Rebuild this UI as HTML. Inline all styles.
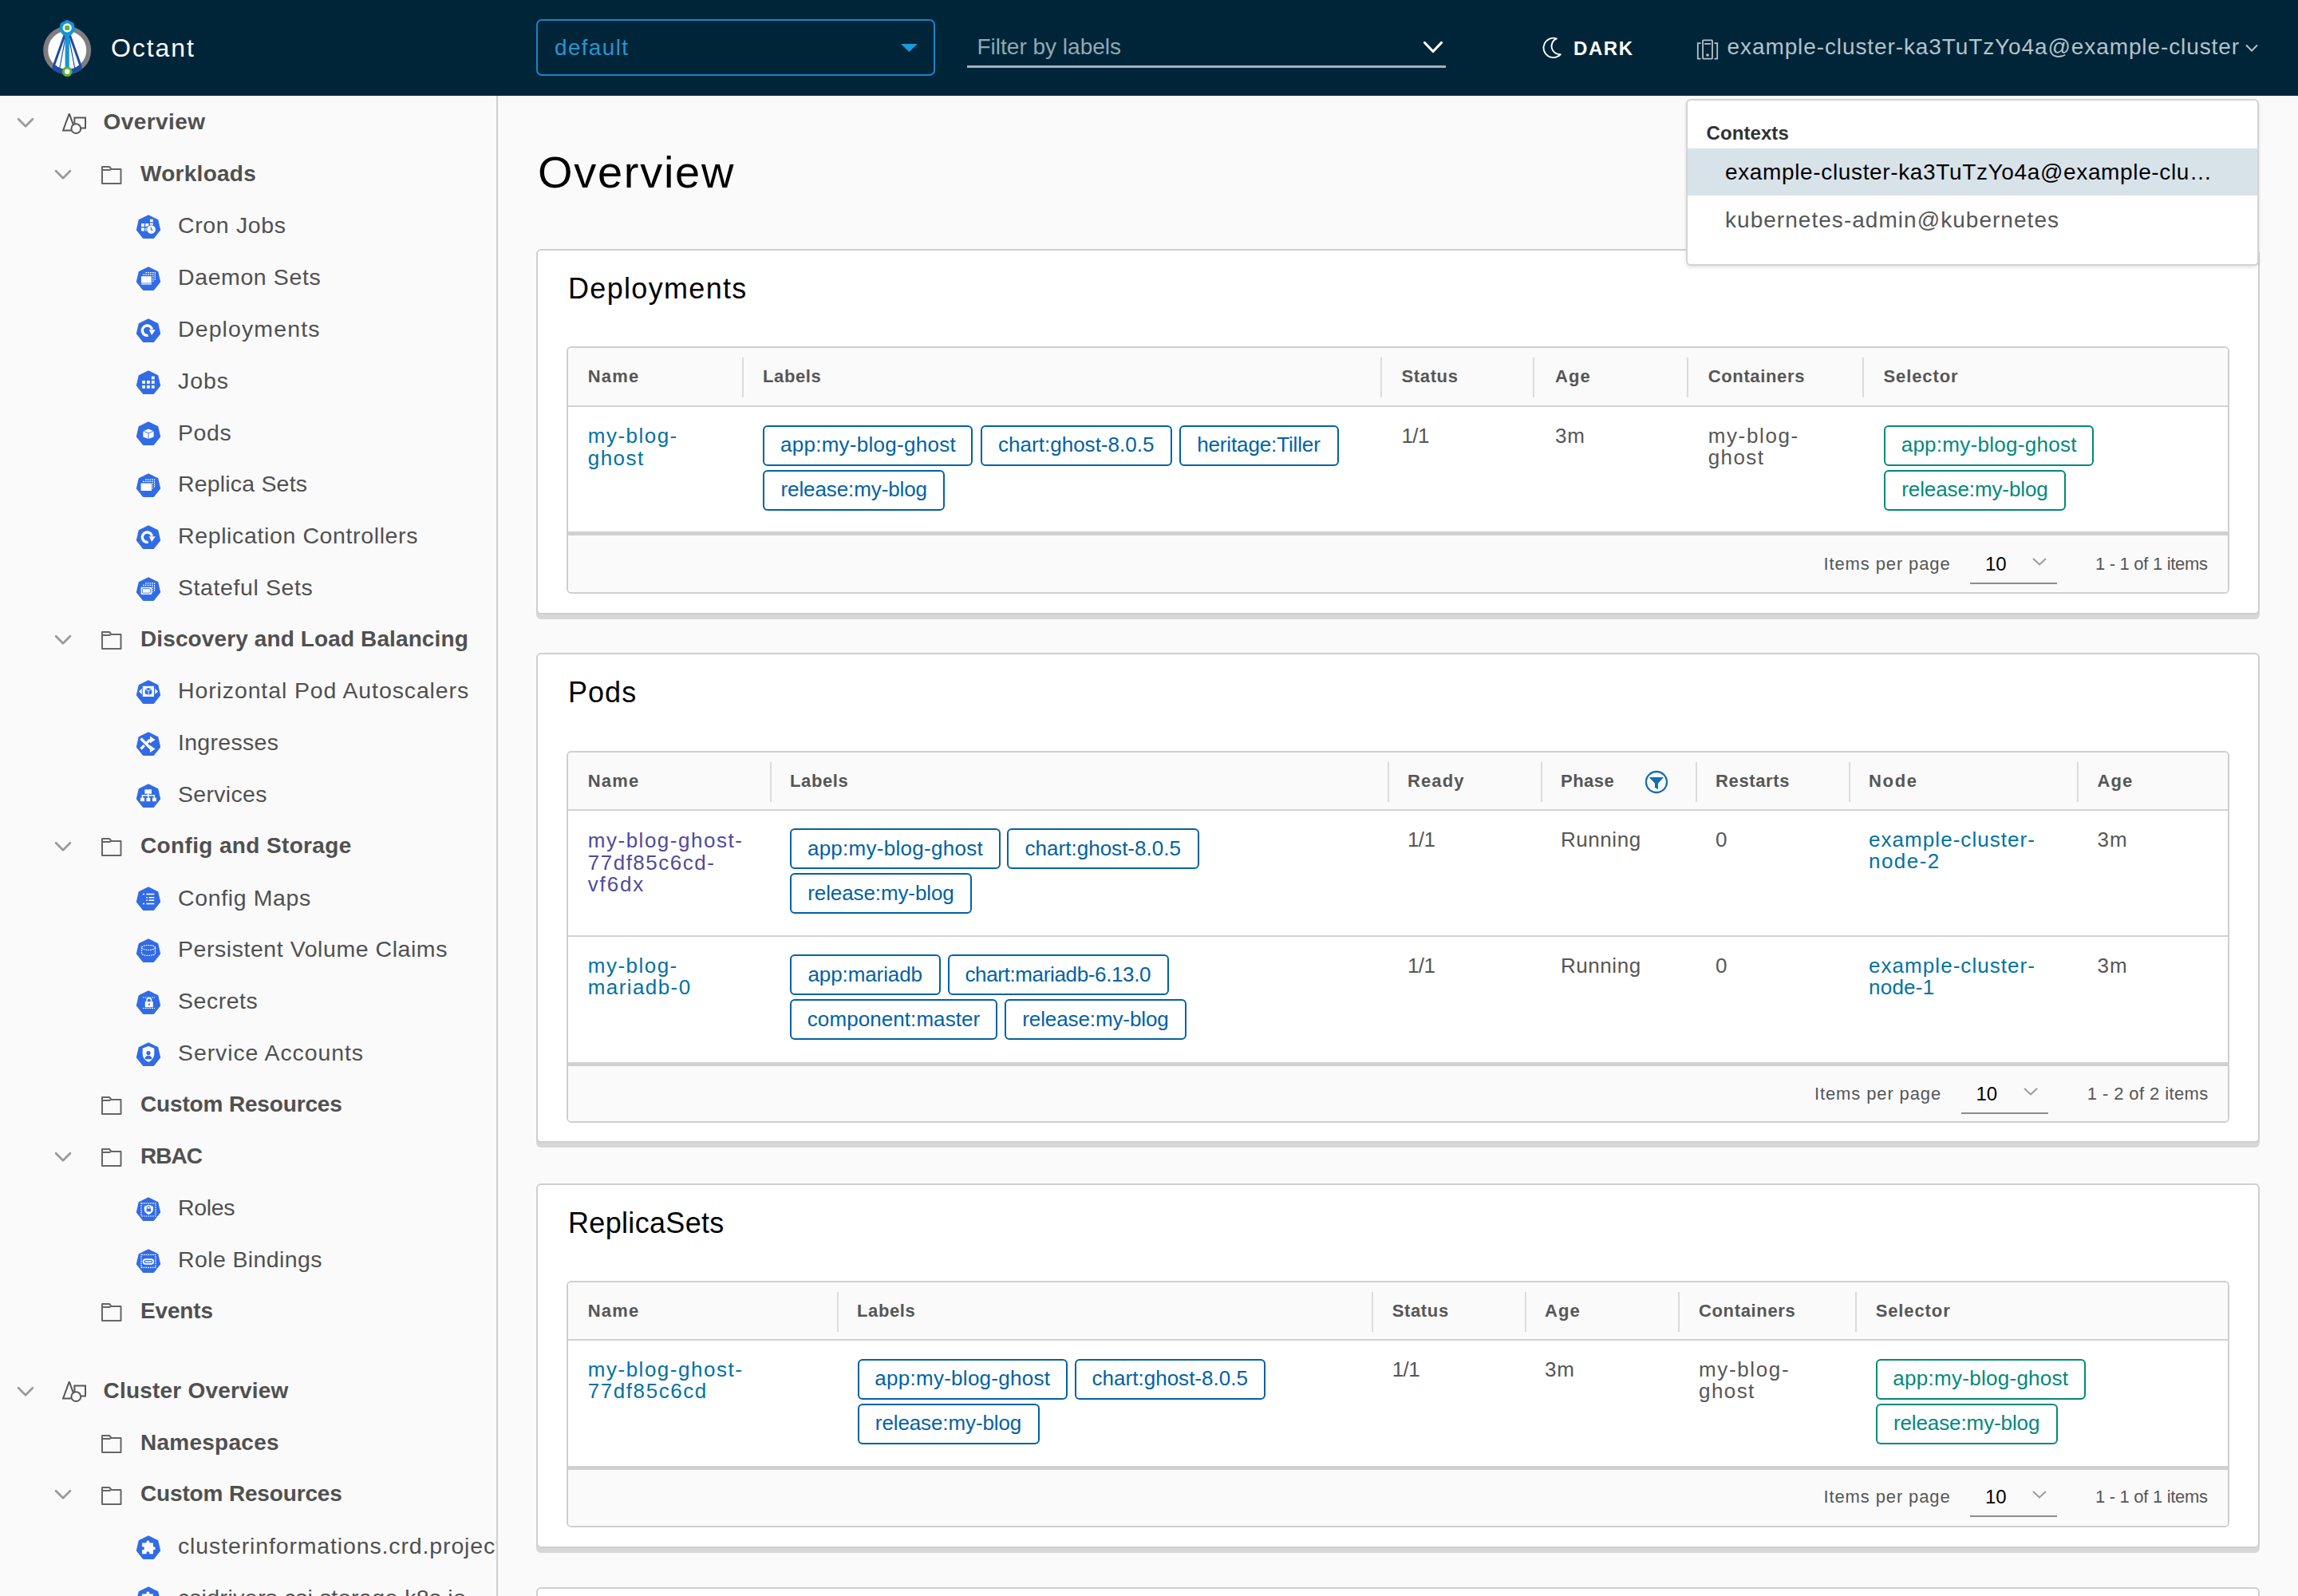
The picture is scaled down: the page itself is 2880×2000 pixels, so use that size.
<!DOCTYPE html><html><head><meta charset="utf-8"><style>
html,body{margin:0;padding:0}
body{width:2880px;height:2000px;overflow:hidden;position:relative;background:#fafafa;
font-family:"Liberation Sans",sans-serif;}
.t{position:absolute;white-space:nowrap;line-height:1}
.b{position:absolute;box-sizing:border-box}
@media (max-width:2000px){html{zoom:0.5}}
</style></head><body><div class="b" style="left:0.00px;top:0.00px;width:2880.00px;height:120.00px;background:#002538"></div>
<svg class="b" style="left:50.00px;top:20.00px" width="70" height="80" viewBox="0 0 70 80">
<circle cx="34.2" cy="43" r="27" fill="#fff" stroke="#7f7d82" stroke-width="6"/>
<path d="M16.8,63.7 A27,27 0 0 0 51.6,63.7" fill="none" stroke="#1d4ea3" stroke-width="6.2"/>
<path d="M34.2,15 L16.8,64 M34.2,15 L51.6,64" stroke="#1d4ea3" stroke-width="3" fill="none"/>
<path d="M34.2,15 L24.5,67 M34.2,15 L44,67" stroke="#1d4ea3" stroke-width="1.2" fill="none"/>
<path d="M34.2,15 L34.2,70" stroke="#1595d8" stroke-width="5.2" fill="none"/>
<polygon points="34.20,5.70 41.71,9.31 43.56,17.44 38.37,23.95 30.03,23.95 24.84,17.44 26.69,9.31" fill="#1595d8" stroke="#1595d8" stroke-width="1.5" stroke-linejoin="round"/>
<circle cx="34.2" cy="14.9" r="5.6" fill="#fff"/>
<circle cx="34.2" cy="14.9" r="3.2" fill="#5db33c"/>
<circle cx="34.2" cy="69.75" r="6.4" fill="#5db33c"/>
<circle cx="34.2" cy="69.75" r="3.2" fill="#fff"/>
</svg>
<div class="t" style="left:139.00px;top:44.41px;font-size:32.00px;color:#ffffff;letter-spacing:1.940px;">Octant</div>
<div class="b" style="left:672.00px;top:24.00px;width:500.00px;height:71.00px;border:2.5px solid #1985c4;border-radius:7px"></div>
<div class="t" style="left:695.00px;top:46.30px;font-size:28.00px;color:#2595d3;letter-spacing:1.317px;">default</div>
<svg class="b" style="left:1129.00px;top:55.00px" width="21" height="10" viewBox="0 0 21 10"><polygon points="0,0 21,0 10.5,10" fill="#1a9ad9"/></svg>
<div class="b" style="left:1212.00px;top:82.00px;width:600.00px;height:2.50px;background:#9db3bf"></div>
<div class="t" style="left:1224.50px;top:44.80px;font-size:28.00px;color:#91a8b5;">Filter by labels</div>
<svg class="b" style="left:1783.00px;top:51.00px" width="26" height="17" viewBox="0 0 26 17"><path d="M2.5,2.5 L13,13.5 L23.5,2.5" fill="none" stroke="#fff" stroke-width="3.2" stroke-linecap="round" stroke-linejoin="round"/></svg>
<svg class="b" style="left:1925.00px;top:40.00px" width="40" height="40" viewBox="0 0 40 40"><path d="M25.8,8.3 A12.27,12.27 0 1 0 30.8,28.2 A10.39,10.39 0 0 1 25.8,8.3 Z" fill="none" stroke="#fff" stroke-width="1.9" stroke-linejoin="round"/></svg>
<div class="t" style="left:1972.00px;top:49.28px;font-size:24.00px;color:#ffffff;font-weight:700;letter-spacing:1.567px;">DARK</div>
<svg class="b" style="left:2120.00px;top:40.00px" width="50" height="45" viewBox="0 0 50 45"><g fill="none" stroke="#b3c2cb" stroke-width="1.8"><rect x="14.1" y="10.4" width="11.9" height="23.2" rx="0.8"/><path d="M16,14.9 H24"/><path d="M11.6,14.2 H7.8 V33.7 H11.6 M28.5,14.2 H32.2 V33.7 H28.5"/></g><circle cx="20" cy="29" r="1.8" fill="#b3c2cb"/></svg>
<div class="t" style="left:2164.60px;top:45.00px;font-size:28.00px;color:#b3c2cb;letter-spacing:0.898px;">example-cluster-ka3TuTzYo4a@example-cluster</div>
<svg class="b" style="left:2813.00px;top:54.00px" width="18" height="12" viewBox="0 0 18 12"><path d="M2,2.5 L9,9.5 L16,2.5" fill="none" stroke="#b3c2cb" stroke-width="2"/></svg>
<div class="b" style="left:622.00px;top:120.00px;width:2.00px;height:1880.00px;background:#cfcfcf"></div>
<div class="b" style="left:0;top:120px;width:622px;height:1880px;overflow:hidden">
<svg class="b" style="left:21.00px;top:27.00px" width="22" height="14" viewBox="0 0 21 13"><path d="M2,2 L10.5,10.5 L19,2" fill="none" stroke="#9a9a9a" stroke-width="2.6" stroke-linecap="round" stroke-linejoin="round"/></svg>
<svg class="b" style="left:78.00px;top:20.50px" width="30" height="28" viewBox="0 0 30 28"><g fill="none" stroke="#565656" stroke-width="2"><path d="M8.8,1.3 L1,22.6 L11.2,22.6 M8.8,1.3 L13.6,14.6"/><path d="M15.4,14.6 V6.4 H29 V19.5 H23.4"/><circle cx="17.3" cy="20.2" r="5.9"/></g></svg>
<div class="t" style="left:129.50px;top:19.30px;font-size:28.00px;color:#505050;font-weight:700;letter-spacing:0.414px;">Overview</div>
<svg class="b" style="left:68.00px;top:91.78px" width="22" height="14" viewBox="0 0 21 13"><path d="M2,2 L10.5,10.5 L19,2" fill="none" stroke="#9a9a9a" stroke-width="2.6" stroke-linecap="round" stroke-linejoin="round"/></svg>
<svg class="b" style="left:126.50px;top:88.28px" width="26" height="23" viewBox="0 0 26 23"><path d="M1,22 V1 H10 L12.5,4 H24.5 V22 Z M1,5 H11.5" fill="none" stroke="#666" stroke-width="2" stroke-linejoin="round"/></svg>
<div class="t" style="left:176.00px;top:84.08px;font-size:28.00px;color:#505050;font-weight:700;letter-spacing:0.275px;">Workloads</div>
<svg class="b" style="left:166.00px;top:144.16px" width="40" height="40" viewBox="0 0 40 40"><polygon points="20.00,6.60 31.18,11.98 33.94,24.08 26.20,33.78 13.80,33.78 6.06,24.08 8.82,11.98" fill="#326ce5" stroke="#326ce5" stroke-width="2.4" stroke-linejoin="round"/><g fill="#fff"><rect x="11" y="16" width="4" height="4"/><rect x="11" y="21.5" width="4" height="4"/><rect x="16.3" y="16" width="4" height="4"/><rect x="16.3" y="21.5" width="4" height="4"/><rect x="22" y="10.8" width="3.8" height="3.4"/><rect x="22" y="15.5" width="3.8" height="3"/></g><circle cx="23.6" cy="23.6" r="6.2" fill="#326ce5"/><circle cx="23.6" cy="23.6" r="5.3" fill="#fff"/><path d="M23.4,20.6 V24.3 H26" fill="none" stroke="#326ce5" stroke-width="1.1"/></svg>
<div class="t" style="left:223.00px;top:148.43px;font-size:28.50px;color:#505050;letter-spacing:0.650px;">Cron Jobs</div>
<svg class="b" style="left:166.00px;top:208.94px" width="40" height="40" viewBox="0 0 40 40"><polygon points="20.00,6.60 31.18,11.98 33.94,24.08 26.20,33.78 13.80,33.78 6.06,24.08 8.82,11.98" fill="#326ce5" stroke="#326ce5" stroke-width="2.4" stroke-linejoin="round"/><path d="M16.5,12.6 H28.3 V22.5" fill="none" stroke="#fff" stroke-width="1.2" stroke-dasharray="1.7 1.1"/><path d="M13.5,15.2 H25.8 V25" fill="none" stroke="#fff" stroke-width="1.2" stroke-dasharray="1.7 1.1"/><rect x="11" y="17.2" width="12.8" height="10.4" fill="#fff"/><path d="M11,26 H23.8" stroke="#326ce5" stroke-width="0.8"/></svg>
<div class="t" style="left:223.00px;top:213.21px;font-size:28.50px;color:#505050;letter-spacing:0.600px;">Daemon Sets</div>
<svg class="b" style="left:166.00px;top:273.72px" width="40" height="40" viewBox="0 0 40 40"><polygon points="20.00,6.60 31.18,11.98 33.94,24.08 26.20,33.78 13.80,33.78 6.06,24.08 8.82,11.98" fill="#326ce5" stroke="#326ce5" stroke-width="2.4" stroke-linejoin="round"/><path d="M19.6,26.3 A6.2,6.2 0 1 1 24.5,18.6" fill="none" stroke="#fff" stroke-width="3.3"/><polygon points="20.8,19.2 28.8,19.2 24.1,25.9" fill="#fff"/></svg>
<div class="t" style="left:223.00px;top:277.99px;font-size:28.50px;color:#505050;letter-spacing:1.110px;">Deployments</div>
<svg class="b" style="left:166.00px;top:338.50px" width="40" height="40" viewBox="0 0 40 40"><polygon points="20.00,6.60 31.18,11.98 33.94,24.08 26.20,33.78 13.80,33.78 6.06,24.08 8.82,11.98" fill="#326ce5" stroke="#326ce5" stroke-width="2.4" stroke-linejoin="round"/><g fill="#fff"><rect x="12.2" y="18" width="3.8" height="3.8"/><rect x="18" y="18" width="3.8" height="3.8"/><rect x="23.9" y="18" width="3.8" height="3.8"/><rect x="12.2" y="23.9" width="3.8" height="3.8"/><rect x="18" y="23.9" width="3.8" height="3.8"/><rect x="23.9" y="23.9" width="3.8" height="3.8"/><rect x="23.9" y="12.6" width="3.8" height="3.8"/></g></svg>
<div class="t" style="left:223.00px;top:342.77px;font-size:28.50px;color:#505050;letter-spacing:0.933px;">Jobs</div>
<svg class="b" style="left:166.00px;top:403.28px" width="40" height="40" viewBox="0 0 40 40"><polygon points="20.00,6.60 31.18,11.98 33.94,24.08 26.20,33.78 13.80,33.78 6.06,24.08 8.82,11.98" fill="#326ce5" stroke="#326ce5" stroke-width="2.4" stroke-linejoin="round"/><polygon points="20,14.4 26.6,17.2 26.6,24.4 20,27 13.4,24.4 13.4,17.2" fill="#fff"/><path d="M13.4,17.2 L20,19.8 L26.6,17.2 M20,19.8 V27" fill="none" stroke="#326ce5" stroke-width="0.9"/></svg>
<div class="t" style="left:223.00px;top:407.55px;font-size:28.50px;color:#505050;letter-spacing:0.600px;">Pods</div>
<svg class="b" style="left:166.00px;top:468.06px" width="40" height="40" viewBox="0 0 40 40"><polygon points="20.00,6.60 31.18,11.98 33.94,24.08 26.20,33.78 13.80,33.78 6.06,24.08 8.82,11.98" fill="#326ce5" stroke="#326ce5" stroke-width="2.4" stroke-linejoin="round"/><path d="M16,12.8 H27.6 V22.5" fill="none" stroke="#fff" stroke-width="1.2" stroke-dasharray="1.7 1.1"/><path d="M13,15.3 H25.2 V25" fill="none" stroke="#fff" stroke-width="1.2" stroke-dasharray="1.7 1.1"/><rect x="10.6" y="17.6" width="13.4" height="9.4" fill="#fff"/></svg>
<div class="t" style="left:223.00px;top:472.33px;font-size:28.50px;color:#505050;letter-spacing:0.182px;">Replica Sets</div>
<svg class="b" style="left:166.00px;top:532.84px" width="40" height="40" viewBox="0 0 40 40"><polygon points="20.00,6.60 31.18,11.98 33.94,24.08 26.20,33.78 13.80,33.78 6.06,24.08 8.82,11.98" fill="#326ce5" stroke="#326ce5" stroke-width="2.4" stroke-linejoin="round"/><path d="M19.6,26.3 A6.2,6.2 0 1 1 24.5,18.6" fill="none" stroke="#fff" stroke-width="3.3"/><polygon points="20.8,19.2 28.8,19.2 24.1,25.9" fill="#fff"/></svg>
<div class="t" style="left:223.00px;top:537.11px;font-size:28.50px;color:#505050;letter-spacing:0.623px;">Replication Controllers</div>
<svg class="b" style="left:166.00px;top:597.62px" width="40" height="40" viewBox="0 0 40 40"><polygon points="20.00,6.60 31.18,11.98 33.94,24.08 26.20,33.78 13.80,33.78 6.06,24.08 8.82,11.98" fill="#326ce5" stroke="#326ce5" stroke-width="2.4" stroke-linejoin="round"/><path d="M16,12.8 H27.6 V22.5" fill="none" stroke="#fff" stroke-width="1.2" stroke-dasharray="1.7 1.1"/><path d="M13,15.3 H25.2 V25" fill="none" stroke="#fff" stroke-width="1.2" stroke-dasharray="1.7 1.1"/><rect x="10.6" y="17.8" width="13.6" height="9.2" rx="1" fill="#fff"/><rect x="12.4" y="19.6" width="10" height="5.6" rx="0.8" fill="none" stroke="#326ce5" stroke-width="0.9"/></svg>
<div class="t" style="left:223.00px;top:601.89px;font-size:28.50px;color:#505050;letter-spacing:0.592px;">Stateful Sets</div>
<svg class="b" style="left:68.00px;top:674.80px" width="22" height="14" viewBox="0 0 21 13"><path d="M2,2 L10.5,10.5 L19,2" fill="none" stroke="#9a9a9a" stroke-width="2.6" stroke-linecap="round" stroke-linejoin="round"/></svg>
<svg class="b" style="left:126.50px;top:671.30px" width="26" height="23" viewBox="0 0 26 23"><path d="M1,22 V1 H10 L12.5,4 H24.5 V22 Z M1,5 H11.5" fill="none" stroke="#666" stroke-width="2" stroke-linejoin="round"/></svg>
<div class="t" style="left:176.00px;top:667.10px;font-size:28.00px;color:#505050;font-weight:700;letter-spacing:0.115px;">Discovery and Load Balancing</div>
<svg class="b" style="left:166.00px;top:727.18px" width="40" height="40" viewBox="0 0 40 40"><polygon points="20.00,6.60 31.18,11.98 33.94,24.08 26.20,33.78 13.80,33.78 6.06,24.08 8.82,11.98" fill="#326ce5" stroke="#326ce5" stroke-width="2.4" stroke-linejoin="round"/><rect x="12.8" y="12.8" width="14.2" height="13.2" fill="#fff"/><polygon points="20,15 24.3,16.8 24.3,22.2 20,24 15.7,22.2 15.7,16.8" fill="#326ce5"/><path d="M15.7,16.8 L20,18.5 L24.3,16.8 M20,18.5 V24" fill="none" stroke="#fff" stroke-width="0.9"/><path d="M8,19.4 L11.8,15.8 V23 Z M32,19.4 L28.2,15.8 V23 Z" fill="#fff"/></svg>
<div class="t" style="left:223.00px;top:731.45px;font-size:28.50px;color:#505050;letter-spacing:0.880px;">Horizontal Pod Autoscalers</div>
<svg class="b" style="left:166.00px;top:791.96px" width="40" height="40" viewBox="0 0 40 40"><polygon points="20.00,6.60 31.18,11.98 33.94,24.08 26.20,33.78 13.80,33.78 6.06,24.08 8.82,11.98" fill="#326ce5" stroke="#326ce5" stroke-width="2.4" stroke-linejoin="round"/><path d="M10.5,13.5 L23.5,26.5 M10.5,26.5 L14.8,22.2 M17.3,19.7 L22,15" fill="none" stroke="#fff" stroke-width="3.2"/><path d="M22,10.5 L28.5,15 L22,19.5 Z M22,22 L28.5,26.5 L22,31 Z" fill="#fff"/></svg>
<div class="t" style="left:223.00px;top:796.23px;font-size:28.50px;color:#505050;letter-spacing:0.300px;">Ingresses</div>
<svg class="b" style="left:166.00px;top:856.74px" width="40" height="40" viewBox="0 0 40 40"><polygon points="20.00,6.60 31.18,11.98 33.94,24.08 26.20,33.78 13.80,33.78 6.06,24.08 8.82,11.98" fill="#326ce5" stroke="#326ce5" stroke-width="2.4" stroke-linejoin="round"/><g fill="#fff"><rect x="15.4" y="12.3" width="8.6" height="5.4"/><rect x="10" y="22.8" width="5" height="4.4"/><rect x="17.5" y="22.8" width="4.8" height="4.4"/><rect x="25" y="22.8" width="4.8" height="4.4"/></g><path d="M19.8,17.5 V23 M12.5,23 V19.8 H27.4 V23" fill="none" stroke="#fff" stroke-width="1.5"/></svg>
<div class="t" style="left:223.00px;top:861.01px;font-size:28.50px;color:#505050;letter-spacing:0.314px;">Services</div>
<svg class="b" style="left:68.00px;top:933.92px" width="22" height="14" viewBox="0 0 21 13"><path d="M2,2 L10.5,10.5 L19,2" fill="none" stroke="#9a9a9a" stroke-width="2.6" stroke-linecap="round" stroke-linejoin="round"/></svg>
<svg class="b" style="left:126.50px;top:930.42px" width="26" height="23" viewBox="0 0 26 23"><path d="M1,22 V1 H10 L12.5,4 H24.5 V22 Z M1,5 H11.5" fill="none" stroke="#666" stroke-width="2" stroke-linejoin="round"/></svg>
<div class="t" style="left:176.00px;top:926.22px;font-size:28.00px;color:#505050;font-weight:700;letter-spacing:0.359px;">Config and Storage</div>
<svg class="b" style="left:166.00px;top:986.30px" width="40" height="40" viewBox="0 0 40 40"><polygon points="20.00,6.60 31.18,11.98 33.94,24.08 26.20,33.78 13.80,33.78 6.06,24.08 8.82,11.98" fill="#326ce5" stroke="#326ce5" stroke-width="2.4" stroke-linejoin="round"/><g fill="none" stroke="#fff" stroke-width="1.5"><path d="M13,14.4 H15 M17.3,14.4 H27.3 M17.3,18.7 H19 M20.5,18.7 H27.3 M17.3,22.3 H19 M20.5,22.3 H27.3 M13,26.6 H15 M17.3,26.6 H27.3"/></g></svg>
<div class="t" style="left:223.00px;top:990.57px;font-size:28.50px;color:#505050;letter-spacing:0.620px;">Config Maps</div>
<svg class="b" style="left:166.00px;top:1051.08px" width="40" height="40" viewBox="0 0 40 40"><polygon points="20.00,6.60 31.18,11.98 33.94,24.08 26.20,33.78 13.80,33.78 6.06,24.08 8.82,11.98" fill="#326ce5" stroke="#326ce5" stroke-width="2.4" stroke-linejoin="round"/><g fill="none" stroke="#fff" stroke-width="1.2" stroke-dasharray="1.7 1.1"><ellipse cx="20" cy="16.5" rx="8.5" ry="3"/><path d="M11.5,16.5 V23.5 A8.5,3 0 0 0 28.5,23.5 V16.5"/></g></svg>
<div class="t" style="left:223.00px;top:1055.35px;font-size:28.50px;color:#505050;letter-spacing:0.552px;">Persistent Volume Claims</div>
<svg class="b" style="left:166.00px;top:1115.86px" width="40" height="40" viewBox="0 0 40 40"><polygon points="20.00,6.60 31.18,11.98 33.94,24.08 26.20,33.78 13.80,33.78 6.06,24.08 8.82,11.98" fill="#326ce5" stroke="#326ce5" stroke-width="2.4" stroke-linejoin="round"/><path d="M13,14 H28 M13,27.5 H28" fill="none" stroke="#fff" stroke-width="1.2" stroke-dasharray="1.7 1.1"/><rect x="15.8" y="19.2" width="10" height="7" fill="#fff"/><path d="M18,19.3 V17.6 A2.8,2.8 0 0 1 23.6,17.6 V19.3" fill="none" stroke="#fff" stroke-width="1.5"/><rect x="20" y="21.6" width="1.8" height="2.2" fill="#326ce5"/></svg>
<div class="t" style="left:223.00px;top:1120.13px;font-size:28.50px;color:#505050;letter-spacing:0.517px;">Secrets</div>
<svg class="b" style="left:166.00px;top:1180.64px" width="40" height="40" viewBox="0 0 40 40"><polygon points="20.00,6.60 31.18,11.98 33.94,24.08 26.20,33.78 13.80,33.78 6.06,24.08 8.82,11.98" fill="#326ce5" stroke="#326ce5" stroke-width="2.4" stroke-linejoin="round"/><path d="M20,10 L27.3,12.8 V19.5 C27.3,24.5 23.8,28.3 20,29.8 C16.2,28.3 12.7,24.5 12.7,19.5 V12.8 Z" fill="#fff"/><circle cx="20" cy="18.6" r="2.6" fill="#326ce5"/><path d="M15.5,26.3 A4.5,4.5 0 0 1 24.5,26.3 Z" fill="#326ce5"/></svg>
<div class="t" style="left:223.00px;top:1184.91px;font-size:28.50px;color:#505050;letter-spacing:0.893px;">Service Accounts</div>
<svg class="b" style="left:126.50px;top:1254.32px" width="26" height="23" viewBox="0 0 26 23"><path d="M1,22 V1 H10 L12.5,4 H24.5 V22 Z M1,5 H11.5" fill="none" stroke="#666" stroke-width="2" stroke-linejoin="round"/></svg>
<div class="t" style="left:176.00px;top:1250.12px;font-size:28.00px;color:#505050;font-weight:700;letter-spacing:-0.160px;">Custom Resources</div>
<svg class="b" style="left:68.00px;top:1322.60px" width="22" height="14" viewBox="0 0 21 13"><path d="M2,2 L10.5,10.5 L19,2" fill="none" stroke="#9a9a9a" stroke-width="2.6" stroke-linecap="round" stroke-linejoin="round"/></svg>
<svg class="b" style="left:126.50px;top:1319.10px" width="26" height="23" viewBox="0 0 26 23"><path d="M1,22 V1 H10 L12.5,4 H24.5 V22 Z M1,5 H11.5" fill="none" stroke="#666" stroke-width="2" stroke-linejoin="round"/></svg>
<div class="t" style="left:176.00px;top:1314.90px;font-size:28.00px;color:#505050;font-weight:700;letter-spacing:-1.000px;">RBAC</div>
<svg class="b" style="left:166.00px;top:1374.98px" width="40" height="40" viewBox="0 0 40 40"><polygon points="20.00,6.60 31.18,11.98 33.94,24.08 26.20,33.78 13.80,33.78 6.06,24.08 8.82,11.98" fill="#326ce5" stroke="#326ce5" stroke-width="2.4" stroke-linejoin="round"/><rect x="11" y="12.8" width="18" height="16.2" fill="none" stroke="#fff" stroke-width="1.2" stroke-dasharray="1.7 1.1"/><path d="M20.3,14.8 L25.9,16.8 V20.8 C25.9,23.8 23.3,26 20.3,26.9 C17.3,26 14.8,23.8 14.8,20.8 V16.8 Z" fill="#fff"/><rect x="17.6" y="19.5" width="5.4" height="3.8" fill="#326ce5"/><path d="M18.6,19.6 V18.4 A1.7,1.7 0 0 1 22,18.4 V19.6" fill="none" stroke="#326ce5" stroke-width="1"/></svg>
<div class="t" style="left:223.00px;top:1379.25px;font-size:28.50px;color:#505050;letter-spacing:-0.350px;">Roles</div>
<svg class="b" style="left:166.00px;top:1439.76px" width="40" height="40" viewBox="0 0 40 40"><polygon points="20.00,6.60 31.18,11.98 33.94,24.08 26.20,33.78 13.80,33.78 6.06,24.08 8.82,11.98" fill="#326ce5" stroke="#326ce5" stroke-width="2.4" stroke-linejoin="round"/><rect x="11" y="12.4" width="18" height="15.9" fill="none" stroke="#fff" stroke-width="1.2" stroke-dasharray="1.7 1.1"/><rect x="13.6" y="18.2" width="12.6" height="5.6" rx="2.8" fill="none" stroke="#fff" stroke-width="1.7"/><path d="M16,21 H23.8" stroke="#fff" stroke-width="1.7"/></svg>
<div class="t" style="left:223.00px;top:1444.03px;font-size:28.50px;color:#505050;letter-spacing:0.383px;">Role Bindings</div>
<svg class="b" style="left:126.50px;top:1513.44px" width="26" height="23" viewBox="0 0 26 23"><path d="M1,22 V1 H10 L12.5,4 H24.5 V22 Z M1,5 H11.5" fill="none" stroke="#666" stroke-width="2" stroke-linejoin="round"/></svg>
<div class="t" style="left:176.00px;top:1509.24px;font-size:28.00px;color:#505050;font-weight:700;letter-spacing:-0.160px;">Events</div>
<svg class="b" style="left:21.00px;top:1616.60px" width="22" height="14" viewBox="0 0 21 13"><path d="M2,2 L10.5,10.5 L19,2" fill="none" stroke="#9a9a9a" stroke-width="2.6" stroke-linecap="round" stroke-linejoin="round"/></svg>
<svg class="b" style="left:78.00px;top:1610.10px" width="30" height="28" viewBox="0 0 30 28"><g fill="none" stroke="#565656" stroke-width="2"><path d="M8.8,1.3 L1,22.6 L11.2,22.6 M8.8,1.3 L13.6,14.6"/><path d="M15.4,14.6 V6.4 H29 V19.5 H23.4"/><circle cx="17.3" cy="20.2" r="5.9"/></g></svg>
<div class="t" style="left:129.50px;top:1608.90px;font-size:28.00px;color:#505050;font-weight:700;letter-spacing:0.207px;">Cluster Overview</div>
<svg class="b" style="left:126.50px;top:1677.88px" width="26" height="23" viewBox="0 0 26 23"><path d="M1,22 V1 H10 L12.5,4 H24.5 V22 Z M1,5 H11.5" fill="none" stroke="#666" stroke-width="2" stroke-linejoin="round"/></svg>
<div class="t" style="left:176.00px;top:1673.68px;font-size:28.00px;color:#505050;font-weight:700;letter-spacing:0.256px;">Namespaces</div>
<svg class="b" style="left:68.00px;top:1746.16px" width="22" height="14" viewBox="0 0 21 13"><path d="M2,2 L10.5,10.5 L19,2" fill="none" stroke="#9a9a9a" stroke-width="2.6" stroke-linecap="round" stroke-linejoin="round"/></svg>
<svg class="b" style="left:126.50px;top:1742.66px" width="26" height="23" viewBox="0 0 26 23"><path d="M1,22 V1 H10 L12.5,4 H24.5 V22 Z M1,5 H11.5" fill="none" stroke="#666" stroke-width="2" stroke-linejoin="round"/></svg>
<div class="t" style="left:176.00px;top:1738.46px;font-size:28.00px;color:#505050;font-weight:700;letter-spacing:-0.160px;">Custom Resources</div>
<svg class="b" style="left:166.00px;top:1798.54px" width="40" height="40" viewBox="0 0 40 40"><polygon points="20.00,6.60 31.18,11.98 33.94,24.08 26.20,33.78 13.80,33.78 6.06,24.08 8.82,11.98" fill="#326ce5" stroke="#326ce5" stroke-width="2.4" stroke-linejoin="round"/><path d="M12.1,14.4 H17.6 A2,2 0 1 1 21.2,14.4 H25.9 V19.4 A2,2 0 1 1 25.9,23 V28.2 H21.2 A2,2 0 1 0 17.6,28.2 H12.1 V23 A2,2 0 1 0 12.1,19.4 Z" fill="#fff"/></svg>
<div class="t" style="left:223.00px;top:1802.81px;font-size:28.50px;color:#505050;letter-spacing:0.864px;">clusterinformations.crd.projectcalico.org</div>
<svg class="b" style="left:166.00px;top:1863.32px" width="40" height="40" viewBox="0 0 40 40"><polygon points="20.00,6.60 31.18,11.98 33.94,24.08 26.20,33.78 13.80,33.78 6.06,24.08 8.82,11.98" fill="#326ce5" stroke="#326ce5" stroke-width="2.4" stroke-linejoin="round"/><path d="M12.1,14.4 H17.6 A2,2 0 1 1 21.2,14.4 H25.9 V19.4 A2,2 0 1 1 25.9,23 V28.2 H21.2 A2,2 0 1 0 17.6,28.2 H12.1 V23 A2,2 0 1 0 12.1,19.4 Z" fill="#fff"/></svg>
<div class="t" style="left:223.00px;top:1867.59px;font-size:28.50px;color:#505050;letter-spacing:0.443px;">csidrivers.csi.storage.k8s.io</div>
</div>
<div class="t" style="left:674.00px;top:187.60px;font-size:56.00px;color:#000;letter-spacing:1.714px;">Overview</div>
<div class="b" style="left:672.00px;top:312.00px;width:2160.00px;height:458.00px;background:#fff;border:2px solid #cfcfcf;border-radius:6px;box-shadow:0 6px 0 #d7d7d7"></div>
<div class="t" style="left:712.00px;top:343.53px;font-size:36.00px;color:#000;letter-spacing:1.320px;">Deployments</div>
<div class="b" style="left:710.00px;top:434.00px;width:2084.00px;height:310.00px;background:#fff;border:2px solid #cfcfcf;border-radius:6px;overflow:hidden"></div>
<div class="b" style="left:712.00px;top:436.00px;width:2080.00px;height:74.00px;background:#fafafa;border-radius:4px 4px 0 0"></div>
<div class="b" style="left:712.00px;top:508.00px;width:2080.00px;height:2.00px;background:#d2d2d2"></div>
<div class="b" style="left:712.00px;top:666.00px;width:2080.00px;height:2.00px;background:#d2d2d2"></div>
<div class="b" style="left:712.00px;top:668.00px;width:2080.00px;height:74.00px;background:#fafafa;border-radius:0 0 4px 4px"></div>
<div class="b" style="left:712.00px;top:668.00px;width:2080.00px;height:3.00px;background:#d0d0d0"></div>
<div class="b" style="left:930.00px;top:448.00px;width:2.00px;height:50.00px;background:#dcdcdc"></div>
<div class="b" style="left:1730.00px;top:448.00px;width:2.00px;height:50.00px;background:#dcdcdc"></div>
<div class="b" style="left:1921.00px;top:448.00px;width:2.00px;height:50.00px;background:#dcdcdc"></div>
<div class="b" style="left:2114.00px;top:448.00px;width:2.00px;height:50.00px;background:#dcdcdc"></div>
<div class="b" style="left:2334.00px;top:448.00px;width:2.00px;height:50.00px;background:#dcdcdc"></div>
<div class="t" style="left:736.80px;top:461.38px;font-size:22.00px;color:#565656;font-weight:700;letter-spacing:1.133px;">Name</div>
<div class="t" style="left:956.00px;top:461.38px;font-size:22.00px;color:#565656;font-weight:700;letter-spacing:0.620px;">Labels</div>
<div class="t" style="left:1756.50px;top:461.38px;font-size:22.00px;color:#565656;font-weight:700;letter-spacing:0.640px;">Status</div>
<div class="t" style="left:1949.00px;top:461.38px;font-size:22.00px;color:#565656;font-weight:700;letter-spacing:1.050px;">Age</div>
<div class="t" style="left:2140.70px;top:461.38px;font-size:22.00px;color:#565656;font-weight:700;letter-spacing:0.644px;">Containers</div>
<div class="t" style="left:2360.50px;top:461.38px;font-size:22.00px;color:#565656;font-weight:700;letter-spacing:0.886px;">Selector</div>
<div class="t" style="left:2285.50px;top:696.38px;font-size:22.00px;color:#565656;letter-spacing:0.877px;">Items per page</div>
<div class="t" style="left:2488.00px;top:694.68px;font-size:24.00px;color:#000;">10</div>
<div class="b" style="left:2469.00px;top:730.00px;width:109.00px;height:2.00px;background:#8c8c8c"></div>
<svg class="b" style="left:2546.00px;top:698.00px" width="20" height="12" viewBox="0 0 20 12"><path d="M2,2 L10,9.5 L18,2" fill="none" stroke="#9a9a9a" stroke-width="2"/></svg>
<div class="t" style="left:2626.00px;top:696.38px;font-size:22.00px;color:#565656;letter-spacing:-0.300px;">1 - 1 of 1 items</div>
<div class="t" style="left:736.80px;top:532.99px;font-size:26.00px;color:#0072a3;letter-spacing:1.471px;">my-blog-</div>
<div class="t" style="left:736.80px;top:560.99px;font-size:26.00px;color:#0072a3;letter-spacing:1.450px;">ghost</div>
<div class="b" style="left:956.30px;top:532.50px;width:263.00px;height:51.00px;border:2px solid #0062a3;border-radius:6px;background:#fff"></div>
<div class="t" style="left:977.95px;top:544.49px;font-size:26.00px;color:#0062a3;letter-spacing:0.275px;">app:my-blog-ghost</div>
<div class="b" style="left:1229.00px;top:532.50px;width:239.50px;height:51.00px;border:2px solid #0062a3;border-radius:6px;background:#fff"></div>
<div class="t" style="left:1251.10px;top:544.49px;font-size:26.00px;color:#0062a3;letter-spacing:0.013px;">chart:ghost-8.0.5</div>
<div class="b" style="left:1477.50px;top:532.50px;width:200.00px;height:51.00px;border:2px solid #0062a3;border-radius:6px;background:#fff"></div>
<div class="t" style="left:1500.20px;top:544.49px;font-size:26.00px;color:#0062a3;letter-spacing:-0.136px;">heritage:Tiller</div>
<div class="b" style="left:956.30px;top:588.50px;width:228.00px;height:51.00px;border:2px solid #0062a3;border-radius:6px;background:#fff"></div>
<div class="t" style="left:978.55px;top:600.49px;font-size:26.00px;color:#0062a3;letter-spacing:-0.107px;">release:my-blog</div>
<div class="t" style="left:1756.50px;top:532.99px;font-size:26.00px;color:#565656;letter-spacing:-0.600px;">1/1</div>
<div class="t" style="left:1949.00px;top:532.99px;font-size:26.00px;color:#565656;letter-spacing:0.900px;">3m</div>
<div class="t" style="left:2140.70px;top:532.99px;font-size:26.00px;color:#565656;letter-spacing:1.629px;">my-blog-</div>
<div class="t" style="left:2140.70px;top:560.49px;font-size:26.00px;color:#565656;letter-spacing:1.425px;">ghost</div>
<div class="b" style="left:2361.00px;top:532.50px;width:263.00px;height:51.00px;border:2px solid #00897b;border-radius:6px;background:#fff"></div>
<div class="t" style="left:2382.65px;top:544.49px;font-size:26.00px;color:#00897b;letter-spacing:0.275px;">app:my-blog-ghost</div>
<div class="b" style="left:2361.00px;top:588.50px;width:228.00px;height:51.00px;border:2px solid #00897b;border-radius:6px;background:#fff"></div>
<div class="t" style="left:2383.25px;top:600.49px;font-size:26.00px;color:#00897b;letter-spacing:-0.107px;">release:my-blog</div>
<div class="b" style="left:672.00px;top:818.00px;width:2160.00px;height:614.00px;background:#fff;border:2px solid #cfcfcf;border-radius:6px;box-shadow:0 6px 0 #d7d7d7"></div>
<div class="t" style="left:712.00px;top:849.93px;font-size:36.00px;color:#000;letter-spacing:1.033px;">Pods</div>
<div class="b" style="left:710.00px;top:941.00px;width:2084.00px;height:466.00px;background:#fff;border:2px solid #cfcfcf;border-radius:6px;overflow:hidden"></div>
<div class="b" style="left:712.00px;top:943.00px;width:2080.00px;height:73.00px;background:#fafafa;border-radius:4px 4px 0 0"></div>
<div class="b" style="left:712.00px;top:1014.00px;width:2080.00px;height:2.00px;background:#d2d2d2"></div>
<div class="b" style="left:712.00px;top:1172.00px;width:2080.00px;height:2.00px;background:#d2d2d2"></div>
<div class="b" style="left:712.00px;top:1331.00px;width:2080.00px;height:2.00px;background:#d2d2d2"></div>
<div class="b" style="left:712.00px;top:1333.00px;width:2080.00px;height:72.00px;background:#fafafa;border-radius:0 0 4px 4px"></div>
<div class="b" style="left:712.00px;top:1333.00px;width:2080.00px;height:3.00px;background:#d0d0d0"></div>
<div class="b" style="left:964.50px;top:955.00px;width:2.00px;height:50.00px;background:#dcdcdc"></div>
<div class="b" style="left:1738.50px;top:955.00px;width:2.00px;height:50.00px;background:#dcdcdc"></div>
<div class="b" style="left:1931.00px;top:955.00px;width:2.00px;height:50.00px;background:#dcdcdc"></div>
<div class="b" style="left:2125.00px;top:955.00px;width:2.00px;height:50.00px;background:#dcdcdc"></div>
<div class="b" style="left:2317.00px;top:955.00px;width:2.00px;height:50.00px;background:#dcdcdc"></div>
<div class="b" style="left:2603.00px;top:955.00px;width:2.00px;height:50.00px;background:#dcdcdc"></div>
<div class="t" style="left:736.80px;top:968.38px;font-size:22.00px;color:#565656;font-weight:700;letter-spacing:1.133px;">Name</div>
<div class="t" style="left:990.00px;top:968.38px;font-size:22.00px;color:#565656;font-weight:700;letter-spacing:0.620px;">Labels</div>
<div class="t" style="left:1764.00px;top:968.38px;font-size:22.00px;color:#565656;font-weight:700;letter-spacing:1.100px;">Ready</div>
<div class="t" style="left:1956.00px;top:968.38px;font-size:22.00px;color:#565656;font-weight:700;letter-spacing:0.500px;">Phase</div>
<div class="t" style="left:2150.00px;top:968.38px;font-size:22.00px;color:#565656;font-weight:700;letter-spacing:0.629px;">Restarts</div>
<div class="t" style="left:2342.00px;top:968.38px;font-size:22.00px;color:#565656;font-weight:700;letter-spacing:1.667px;">Node</div>
<div class="t" style="left:2628.60px;top:968.38px;font-size:22.00px;color:#565656;font-weight:700;letter-spacing:1.050px;">Age</div>
<div class="t" style="left:2274.00px;top:1360.38px;font-size:22.00px;color:#565656;letter-spacing:0.877px;">Items per page</div>
<div class="t" style="left:2476.50px;top:1358.68px;font-size:24.00px;color:#000;">10</div>
<div class="b" style="left:2457.50px;top:1394.00px;width:109.00px;height:2.00px;background:#8c8c8c"></div>
<svg class="b" style="left:2534.50px;top:1362.00px" width="20" height="12" viewBox="0 0 20 12"><path d="M2,2 L10,9.5 L18,2" fill="none" stroke="#9a9a9a" stroke-width="2"/></svg>
<div class="t" style="left:2615.80px;top:1360.38px;font-size:22.00px;color:#565656;letter-spacing:0.400px;">1 - 2 of 2 items</div>
<svg class="b" style="left:2061.00px;top:964.00px" width="30" height="32" viewBox="0 0 30 32"><circle cx="15" cy="16" r="13" fill="none" stroke="#1570ad" stroke-width="2.3"/><path d="M5.8,10 H24 L17,17.8 V25.2 L13,23 V17.8 Z" fill="#1570ad"/></svg>
<div class="t" style="left:736.80px;top:1040.29px;font-size:26.00px;color:#4f4a9e;letter-spacing:1.508px;">my-blog-ghost-</div>
<div class="t" style="left:736.80px;top:1067.69px;font-size:26.00px;color:#4f4a9e;letter-spacing:1.490px;">77df85c6cd-</div>
<div class="t" style="left:736.80px;top:1095.09px;font-size:26.00px;color:#4f4a9e;letter-spacing:1.825px;">vf6dx</div>
<div class="b" style="left:990.00px;top:1038.00px;width:263.50px;height:51.00px;border:2px solid #0062a3;border-radius:6px;background:#fff"></div>
<div class="t" style="left:1011.90px;top:1049.99px;font-size:26.00px;color:#0062a3;letter-spacing:0.275px;">app:my-blog-ghost</div>
<div class="b" style="left:1262.00px;top:1038.00px;width:240.50px;height:51.00px;border:2px solid #0062a3;border-radius:6px;background:#fff"></div>
<div class="t" style="left:1284.60px;top:1049.99px;font-size:26.00px;color:#0062a3;letter-spacing:0.013px;">chart:ghost-8.0.5</div>
<div class="b" style="left:990.00px;top:1094.00px;width:228.00px;height:51.00px;border:2px solid #0062a3;border-radius:6px;background:#fff"></div>
<div class="t" style="left:1012.25px;top:1105.99px;font-size:26.00px;color:#0062a3;letter-spacing:-0.107px;">release:my-blog</div>
<div class="t" style="left:1764.00px;top:1038.99px;font-size:26.00px;color:#565656;letter-spacing:-0.600px;">1/1</div>
<div class="t" style="left:1956.00px;top:1038.99px;font-size:26.00px;color:#565656;letter-spacing:0.550px;">Running</div>
<div class="t" style="left:2150.00px;top:1038.99px;font-size:26.00px;color:#565656;">0</div>
<div class="t" style="left:2342.00px;top:1038.99px;font-size:26.00px;color:#0072a3;letter-spacing:1.053px;">example-cluster-</div>
<div class="t" style="left:2342.00px;top:1066.49px;font-size:26.00px;color:#0072a3;letter-spacing:1.460px;">node-2</div>
<div class="t" style="left:2628.60px;top:1038.99px;font-size:26.00px;color:#565656;letter-spacing:0.900px;">3m</div>
<div class="t" style="left:736.80px;top:1196.99px;font-size:26.00px;color:#0072a3;letter-spacing:1.471px;">my-blog-</div>
<div class="t" style="left:736.80px;top:1224.19px;font-size:26.00px;color:#0072a3;letter-spacing:1.413px;">mariadb-0</div>
<div class="b" style="left:990.00px;top:1196.00px;width:188.50px;height:51.00px;border:2px solid #0062a3;border-radius:6px;background:#fff"></div>
<div class="t" style="left:1012.45px;top:1207.99px;font-size:26.00px;color:#0062a3;letter-spacing:-0.090px;">app:mariadb</div>
<div class="b" style="left:1187.50px;top:1196.00px;width:277.00px;height:51.00px;border:2px solid #0062a3;border-radius:6px;background:#fff"></div>
<div class="t" style="left:1209.45px;top:1207.99px;font-size:26.00px;color:#0062a3;letter-spacing:-0.358px;">chart:mariadb-6.13.0</div>
<div class="b" style="left:990.00px;top:1252.00px;width:260.00px;height:51.00px;border:2px solid #0062a3;border-radius:6px;background:#fff"></div>
<div class="t" style="left:1011.80px;top:1263.99px;font-size:26.00px;color:#0062a3;letter-spacing:0.073px;">component:master</div>
<div class="b" style="left:1259.00px;top:1252.00px;width:228.00px;height:51.00px;border:2px solid #0062a3;border-radius:6px;background:#fff"></div>
<div class="t" style="left:1281.25px;top:1263.99px;font-size:26.00px;color:#0062a3;letter-spacing:-0.107px;">release:my-blog</div>
<div class="t" style="left:1764.00px;top:1196.99px;font-size:26.00px;color:#565656;letter-spacing:-0.600px;">1/1</div>
<div class="t" style="left:1956.00px;top:1196.99px;font-size:26.00px;color:#565656;letter-spacing:0.550px;">Running</div>
<div class="t" style="left:2150.00px;top:1196.99px;font-size:26.00px;color:#565656;">0</div>
<div class="t" style="left:2342.00px;top:1196.99px;font-size:26.00px;color:#0072a3;letter-spacing:1.053px;">example-cluster-</div>
<div class="t" style="left:2342.00px;top:1224.49px;font-size:26.00px;color:#0072a3;letter-spacing:0.240px;">node-1</div>
<div class="t" style="left:2628.60px;top:1196.99px;font-size:26.00px;color:#565656;letter-spacing:0.900px;">3m</div>
<div class="b" style="left:672.00px;top:1482.50px;width:2160.00px;height:457.50px;background:#fff;border:2px solid #cfcfcf;border-radius:6px;box-shadow:0 6px 0 #d7d7d7"></div>
<div class="t" style="left:712.00px;top:1514.53px;font-size:36.00px;color:#000;letter-spacing:0.320px;">ReplicaSets</div>
<div class="b" style="left:710.00px;top:1604.50px;width:2084.00px;height:309.50px;background:#fff;border:2px solid #cfcfcf;border-radius:6px;overflow:hidden"></div>
<div class="b" style="left:712.00px;top:1606.50px;width:2080.00px;height:73.50px;background:#fafafa;border-radius:4px 4px 0 0"></div>
<div class="b" style="left:712.00px;top:1678.00px;width:2080.00px;height:2.00px;background:#d2d2d2"></div>
<div class="b" style="left:712.00px;top:1837.00px;width:2080.00px;height:2.00px;background:#d2d2d2"></div>
<div class="b" style="left:712.00px;top:1839.00px;width:2080.00px;height:73.00px;background:#fafafa;border-radius:0 0 4px 4px"></div>
<div class="b" style="left:712.00px;top:1839.00px;width:2080.00px;height:3.00px;background:#d0d0d0"></div>
<div class="b" style="left:1048.70px;top:1618.50px;width:2.00px;height:50.00px;background:#dcdcdc"></div>
<div class="b" style="left:1719.00px;top:1618.50px;width:2.00px;height:50.00px;background:#dcdcdc"></div>
<div class="b" style="left:1910.60px;top:1618.50px;width:2.00px;height:50.00px;background:#dcdcdc"></div>
<div class="b" style="left:2103.00px;top:1618.50px;width:2.00px;height:50.00px;background:#dcdcdc"></div>
<div class="b" style="left:2325.00px;top:1618.50px;width:2.00px;height:50.00px;background:#dcdcdc"></div>
<div class="t" style="left:736.80px;top:1631.88px;font-size:22.00px;color:#565656;font-weight:700;letter-spacing:1.133px;">Name</div>
<div class="t" style="left:1074.00px;top:1631.88px;font-size:22.00px;color:#565656;font-weight:700;letter-spacing:0.620px;">Labels</div>
<div class="t" style="left:1744.70px;top:1631.88px;font-size:22.00px;color:#565656;font-weight:700;letter-spacing:0.640px;">Status</div>
<div class="t" style="left:1936.00px;top:1631.88px;font-size:22.00px;color:#565656;font-weight:700;letter-spacing:1.050px;">Age</div>
<div class="t" style="left:2129.00px;top:1631.88px;font-size:22.00px;color:#565656;font-weight:700;letter-spacing:0.644px;">Containers</div>
<div class="t" style="left:2350.70px;top:1631.88px;font-size:22.00px;color:#565656;font-weight:700;letter-spacing:0.886px;">Selector</div>
<div class="t" style="left:2285.50px;top:1865.38px;font-size:22.00px;color:#565656;letter-spacing:0.877px;">Items per page</div>
<div class="t" style="left:2488.00px;top:1863.68px;font-size:24.00px;color:#000;">10</div>
<div class="b" style="left:2469.00px;top:1899.00px;width:109.00px;height:2.00px;background:#8c8c8c"></div>
<svg class="b" style="left:2546.00px;top:1867.00px" width="20" height="12" viewBox="0 0 20 12"><path d="M2,2 L10,9.5 L18,2" fill="none" stroke="#9a9a9a" stroke-width="2"/></svg>
<div class="t" style="left:2626.00px;top:1865.38px;font-size:22.00px;color:#565656;letter-spacing:-0.300px;">1 - 1 of 1 items</div>
<div class="t" style="left:736.80px;top:1702.69px;font-size:26.00px;color:#0072a3;letter-spacing:1.508px;">my-blog-ghost-</div>
<div class="t" style="left:736.80px;top:1730.19px;font-size:26.00px;color:#0072a3;letter-spacing:1.556px;">77df85c6cd</div>
<div class="b" style="left:1074.60px;top:1702.50px;width:263.00px;height:51.00px;border:2px solid #0062a3;border-radius:6px;background:#fff"></div>
<div class="t" style="left:1096.25px;top:1714.49px;font-size:26.00px;color:#0062a3;letter-spacing:0.275px;">app:my-blog-ghost</div>
<div class="b" style="left:1346.50px;top:1702.50px;width:239.50px;height:51.00px;border:2px solid #0062a3;border-radius:6px;background:#fff"></div>
<div class="t" style="left:1368.60px;top:1714.49px;font-size:26.00px;color:#0062a3;letter-spacing:0.013px;">chart:ghost-8.0.5</div>
<div class="b" style="left:1074.60px;top:1758.50px;width:228.00px;height:51.00px;border:2px solid #0062a3;border-radius:6px;background:#fff"></div>
<div class="t" style="left:1096.85px;top:1770.49px;font-size:26.00px;color:#0062a3;letter-spacing:-0.107px;">release:my-blog</div>
<div class="t" style="left:1744.70px;top:1702.69px;font-size:26.00px;color:#565656;letter-spacing:-0.600px;">1/1</div>
<div class="t" style="left:1936.00px;top:1702.69px;font-size:26.00px;color:#565656;letter-spacing:0.900px;">3m</div>
<div class="t" style="left:2129.00px;top:1702.79px;font-size:26.00px;color:#565656;letter-spacing:1.629px;">my-blog-</div>
<div class="t" style="left:2129.00px;top:1730.29px;font-size:26.00px;color:#565656;letter-spacing:1.425px;">ghost</div>
<div class="b" style="left:2350.70px;top:1702.50px;width:263.00px;height:51.00px;border:2px solid #00897b;border-radius:6px;background:#fff"></div>
<div class="t" style="left:2372.35px;top:1714.49px;font-size:26.00px;color:#00897b;letter-spacing:0.275px;">app:my-blog-ghost</div>
<div class="b" style="left:2350.70px;top:1758.50px;width:228.00px;height:51.00px;border:2px solid #00897b;border-radius:6px;background:#fff"></div>
<div class="t" style="left:2372.95px;top:1770.49px;font-size:26.00px;color:#00897b;letter-spacing:-0.107px;">release:my-blog</div>
<div class="b" style="left:672.00px;top:1989.00px;width:2160.00px;height:40.00px;background:#fff;border:2px solid #cfcfcf;border-radius:6px"></div>
<div class="b" style="left:2113.00px;top:124.00px;width:718.00px;height:208.50px;background:#fff;border:2px solid #d4d4d4;border-radius:6px;box-shadow:0 2px 4px rgba(0,0,0,0.12)"></div>
<div class="t" style="left:2138.60px;top:155.48px;font-size:24.00px;color:#313131;font-weight:700;letter-spacing:0.071px;">Contexts</div>
<div class="b" style="left:2115.00px;top:186.00px;width:714.00px;height:59.00px;background:#d8e3e9"></div>
<div class="t" style="left:2162.00px;top:202.30px;font-size:28.00px;color:#000;letter-spacing:0.641px;">example-cluster-ka3TuTzYo4a@example-clu…</div>
<div class="t" style="left:2162.00px;top:262.30px;font-size:28.00px;color:#565656;letter-spacing:1.035px;">kubernetes-admin@kubernetes</div></body></html>
